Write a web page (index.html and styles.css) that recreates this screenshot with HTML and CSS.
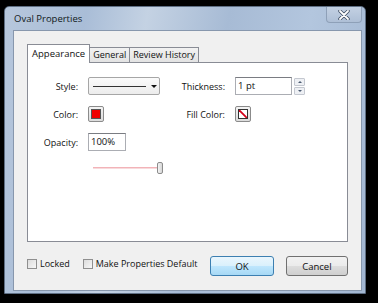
FILE: index.html
```html
<!DOCTYPE html>
<html lang="en">
<head>
  <meta charset="UTF-8">
  <title>Oval Properties</title>
  <link rel="stylesheet" href="styles.css">
</head>
<body>
  <div class="window">
    <!-- title bar -->
    <div class="titlebar">
      <span class="title">Oval Properties</span>
      <span class="close">
        <svg width="12" height="10" viewBox="0 0 12 10">
          <path d="M2 1 L10 9 M10 1 L2 9" stroke="#3b4a5e" stroke-width="3.4" stroke-linecap="round"/>
          <path d="M2 1 L10 9 M10 1 L2 9" stroke="#fff" stroke-width="1.8" stroke-linecap="round"/>
        </svg>
      </span>
    </div>

    <div class="client">
      <!-- tabs -->
      <div class="tabs">
        <span class="tab active">Appearance</span>
        <span class="tab">General</span>
        <span class="tab">Review History</span>
      </div>

      <div class="panel">
        <div class="form">
          <label class="lbl">Style:</label>
          <div class="dropdown">
            <span class="line-sample"></span>
            <span class="arrow"></span>
          </div>
          <label class="lbl">Thickness:</label>
          <div class="spin-field">
            <span class="textbox thick">1 pt</span>
            <span class="spinner">
              <span class="spin up"></span>
              <span class="spin down"></span>
            </span>
          </div>

          <label class="lbl">Color:</label>
          <div><span class="swatch"><span class="fill red"></span></span></div>
          <label class="lbl">Fill Color:</label>
          <div>
            <span class="swatch">
              <svg class="nofill" width="10" height="10" viewBox="0 0 10 10">
                <rect width="10" height="10" fill="#fff"/>
                <path d="M0 0 L10 10" stroke="#d4001a" stroke-width="2.2"/>
              </svg>
            </span>
          </div>

          <label class="lbl">Opacity:</label>
          <div><span class="textbox opacity">100%</span></div>
          <span></span><span></span>

          <span></span>
          <div class="slider">
            <span class="track"></span>
            <span class="thumb"></span>
          </div>
        </div>
      </div>

      <!-- bottom row -->
      <div class="bottom">
        <label class="check"><span class="box"></span>Locked</label>
        <label class="check"><span class="box"></span>Make Properties Default</label>
        <button class="btn ok">OK</button>
        <button class="btn cancel">Cancel</button>
      </div>
    </div>
  </div>
</body>
</html>
```

FILE: styles.css
```css
* {
  margin: 0;
  padding: 0;
  box-sizing: border-box;
}
body {
  background: #000;
  width: 378px;
  height: 303px;
  padding: 6px 12px 9px 4px;
  font-family: 'Open Sans', 'Noto Sans', sans-serif;
  font-size: 9px;
  color: #111;
}

/* window frame */
.window {
  width: 362px;
  height: 288px;
  display: flex;
  flex-direction: column;
  padding: 0 3px 2px 8px;
  border: 1px solid #5f6f84;
  border-radius: 5px 5px 0 0;
  background: linear-gradient(100deg, #b7c7dc 0%, #a9bdd7 20%, #c4d2e3 35%, #a7bbd5 55%, #b3c6de 75%, #a2b6d1 100%);
}
.titlebar {
  height: 23px;
  display: flex;
  justify-content: space-between;
  align-items: flex-start;
}
.title {
  margin: 5px 0 0 1px;
  font-size: 9.5px;
  color: #101820;
}
.close {
  width: 36px;
  height: 16px;
  display: flex;
  align-items: center;
  justify-content: center;
  border: 1px solid #8ea0b8;
  border-top: none;
  border-radius: 0 0 4px 4px;
  background: linear-gradient(#c3d1e3, #aebfd6);
}

/* client area */
.client {
  flex: 1;
  background: #f0f0f0;
  border: 1px solid #8797ad;
  padding: 13px 13px 0 13px;
}
.tabs {
  display: flex;
  align-items: flex-end;
  height: 18px;
  position: relative;
  z-index: 1;
}
.tab {
  height: 15px;
  padding: 0 3px;
  line-height: 14px;
  border: 1px solid #898c95;
  border-bottom: none;
  margin-left: -1px;
  background: linear-gradient(#f2f2f2, #e3e3e3);
}
.tab:first-child {
  margin-left: 0;
}
.tab.active {
  height: 19px;
  margin-bottom: -1px;
  padding: 0 4px;
  line-height: 17px;
  background: #fff;
  font-size: 9.5px;
}
.panel {
  height: 180px;
  background: #fff;
  border: 1px solid #898c95;
  padding-top: 14px;
}

/* form grid */
.form {
  display: grid;
  grid-template-columns: 50px 72px 55px 1fr;
  grid-template-rows: 18px 16px 18px 12px;
  column-gap: 10px;
  row-gap: 11px;
}
.lbl {
  text-align: right;
  align-self: center;
  white-space: nowrap;
}
.dropdown {
  width: 72px;
  height: 18px;
  display: flex;
  align-items: center;
  border: 1px solid #a6a6a6;
  border-radius: 2px;
  background: linear-gradient(#fbfbfb, #ececec);
}
.line-sample {
  width: 53px;
  margin-left: 4px;
  border-top: 1px solid #333;
}
.arrow {
  margin-left: 5px;
  width: 0;
  height: 0;
  border-left: 3px solid transparent;
  border-right: 3px solid transparent;
  border-top: 3px solid #111;
}
.spin-field {
  display: flex;
  align-items: center;
  gap: 2px;
}
.textbox {
  display: block;
  height: 18px;
  padding-left: 2px;
  line-height: 16px;
  font-size: 9.5px;
  border: 1px solid #abadb3;
  border-top-color: #7a7c82;
  background: #fff;
}
.thick {
  width: 57px;
}
.opacity {
  width: 38px;
}
.spinner {
  display: flex;
  flex-direction: column;
  gap: 1px;
}
.spin {
  width: 11px;
  height: 8px;
  border: 1px solid #c4c8d0;
  border-radius: 1px;
  background: #eef0f4;
  position: relative;
}
.spin::after {
  content: '';
  position: absolute;
  left: 3px;
  top: 2px;
  border-left: 2px solid transparent;
  border-right: 2px solid transparent;
}
.spin.up::after {
  border-bottom: 2px solid #4a5a70;
}
.spin.down::after {
  border-top: 2px solid #4a5a70;
}
.swatch {
  width: 16px;
  height: 16px;
  display: flex;
  align-items: center;
  justify-content: center;
  border: 1px solid #8b8b8b;
  border-radius: 2px;
  background: linear-gradient(#f4f4f4, #dcdcdc);
}
.fill {
  width: 10px;
  height: 10px;
  border: 1px solid #555;
}
.red {
  background: #f00000;
}
.nofill {
  border: 1px solid #333;
  box-sizing: content-box;
  width: 8px;
  height: 8px;
}

/* opacity slider */
.slider {
  width: 70px;
  margin-left: 5px;
  display: flex;
  align-items: center;
}
.track {
  width: 64px;
  border-top: 1px solid #f2b3b8;
  border-bottom: 1px solid #f8dadc;
}
.thumb {
  width: 6px;
  height: 12px;
  border: 1px solid #8c8c8c;
  border-radius: 2px;
  background: linear-gradient(90deg, #f4f4f4, #d6d6d6);
}

/* bottom row */
.bottom {
  display: flex;
  align-items: flex-start;
  margin-top: 14px;
}
.check {
  display: flex;
  align-items: center;
  gap: 3px;
  margin-top: 1px;
  margin-right: 13px;
  white-space: nowrap;
}
.box {
  width: 10px;
  height: 10px;
  border: 1px solid #8f8f8f;
  background: linear-gradient(135deg, #dcdcdc, #f7f7f7);
}
.btn {
  height: 20px;
  font-family: inherit;
  font-size: 9.5px;
  color: #111;
  border: 1px solid #707070;
  border-radius: 3px;
  background: linear-gradient(#f2f2f2 0%, #ebebeb 50%, #dddddd 51%, #cfcfcf 100%);
}
.ok {
  width: 65px;
  margin-left: auto;
  border-color: #3c7fb1;
  background: linear-gradient(#eaf6fd 0%, #d9f0fc 50%, #bee6fd 51%, #a7d9f5 100%);
}
.cancel {
  width: 64px;
  margin-left: 12px;
}
```
